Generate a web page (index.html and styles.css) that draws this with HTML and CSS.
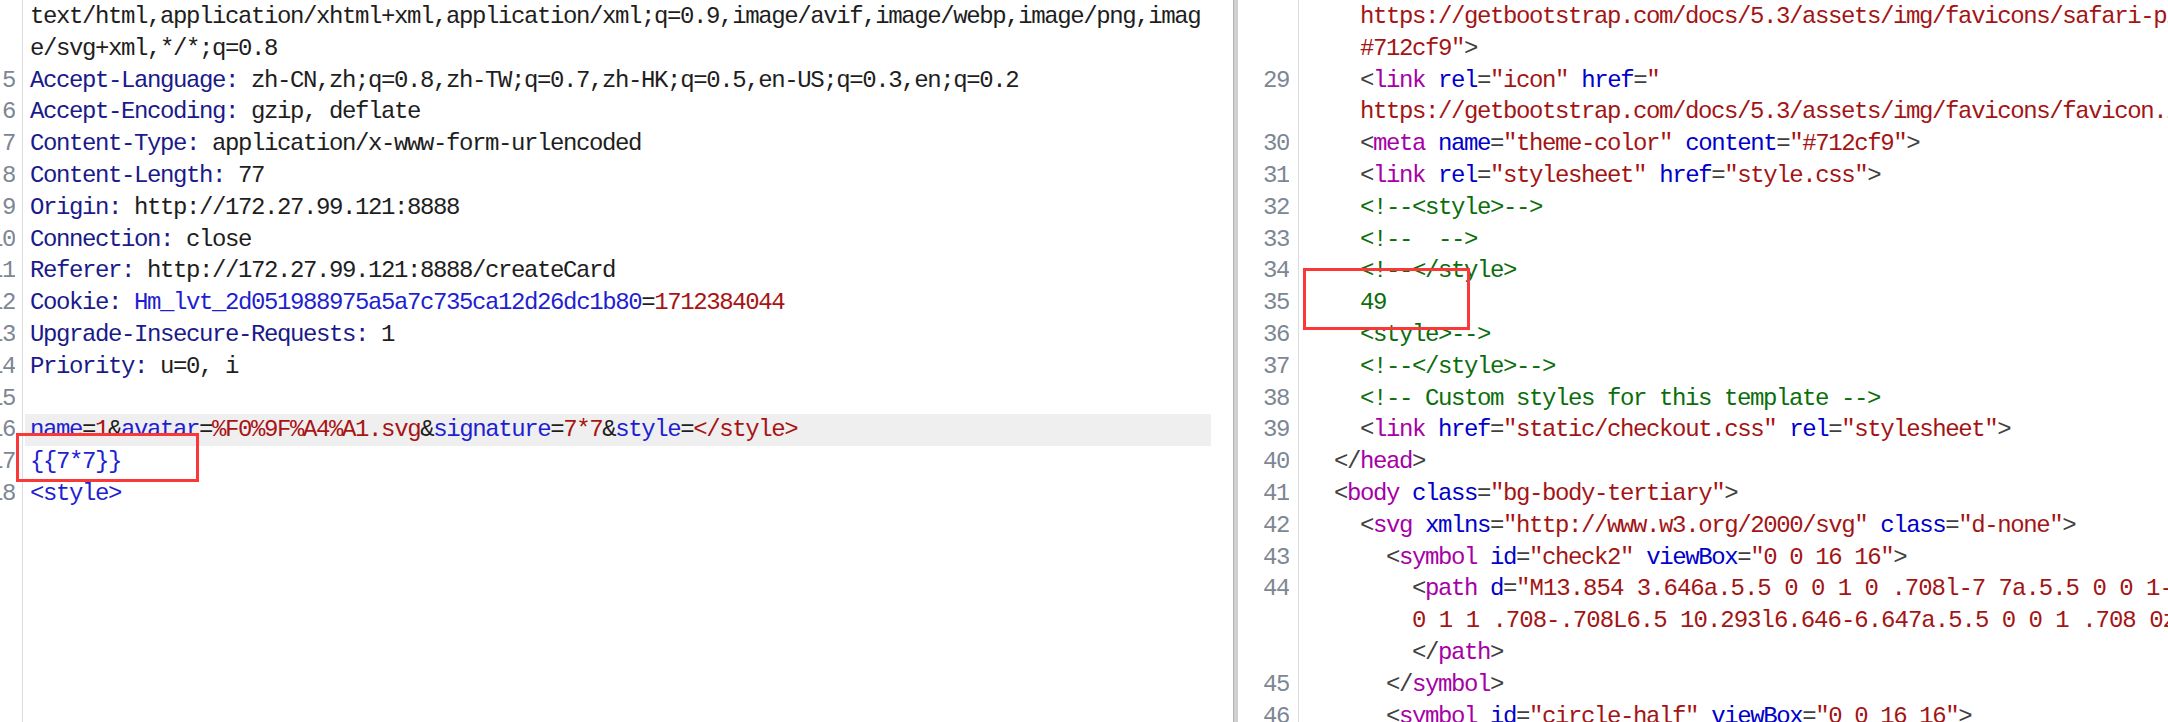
FILE: index.html
```html
<!DOCTYPE html>
<html lang="zh-CN">
<head>
    <meta charset="UTF-8">
    <meta name="viewport" content="width=device-width, initial-scale=1.0">
    <title>Request / Response</title>
    <link rel="stylesheet" href="styles.css">
</head>
<body>
    <div class="editor">
        <!-- request -->
        <div class="pane request">
            <div class="row"><span class="ln"></span><span class="code">text/html,application/xhtml+xml,application/xml;q=0.9,image/avif,image/webp,image/png,imag</span></div>
            <div class="row"><span class="ln"></span><span class="code">e/svg+xml,*/*;q=0.8</span></div>
            <div class="row"><span class="ln">5</span><span class="code"><span class="k">Accept-Language:</span> zh-CN,zh;q=0.8,zh-TW;q=0.7,zh-HK;q=0.5,en-US;q=0.3,en;q=0.2</span></div>
            <div class="row"><span class="ln">6</span><span class="code"><span class="k">Accept-Encoding:</span> gzip, deflate</span></div>
            <div class="row"><span class="ln">7</span><span class="code"><span class="k">Content-Type:</span> application/x-www-form-urlencoded</span></div>
            <div class="row"><span class="ln">8</span><span class="code"><span class="k">Content-Length:</span> 77</span></div>
            <div class="row"><span class="ln">9</span><span class="code"><span class="k">Origin:</span> http://172.27.99.121:8888</span></div>
            <div class="row"><span class="ln">10</span><span class="code"><span class="k">Connection:</span> close</span></div>
            <div class="row"><span class="ln">11</span><span class="code"><span class="k">Referer:</span> http://172.27.99.121:8888/createCard</span></div>
            <div class="row"><span class="ln">12</span><span class="code"><span class="k">Cookie:</span> <span class="pn">Hm_lvt_2d051988975a5a7c735ca12d26dc1b80</span>=<span class="pv">1712384044</span></span></div>
            <div class="row"><span class="ln">13</span><span class="code"><span class="k">Upgrade-Insecure-Requests:</span> 1</span></div>
            <div class="row"><span class="ln">14</span><span class="code"><span class="k">Priority:</span> u=0, i</span></div>
            <div class="row"><span class="ln">15</span><span class="code"></span></div>
            <div class="row current"><span class="ln">16</span><span class="code"><span class="pn">name</span>=<span class="pv">1</span>&amp;<span class="pn">avatar</span>=<span class="pv">%F0%9F%A4%A1.svg</span>&amp;<span class="pn">signature</span>=<span class="pv">7*7</span>&amp;<span class="pn">style</span>=<span class="pv">&lt;/style&gt;</span></span></div>
            <div class="row"><span class="ln">17</span><span class="code"><span class="pn">{{7*7}}</span></span></div>
            <div class="row"><span class="ln">18</span><span class="code"><span class="pn">&lt;style&gt;</span></span></div>

            <div class="mark mark-req"></div>
        </div>

        <div class="splitter"></div>

        <!-- response -->
        <div class="pane response">
            <div class="row"><span class="ln"></span><span class="code">    <span class="s">https://getbootstrap.com/docs/5.3/assets/img/favicons/safari-pinned-tab.svg"</span> <span class="a">color</span><span class="p">=</span><span class="s">"</span></span></div>
            <div class="row"><span class="ln"></span><span class="code">    <span class="s">#712cf9"</span><span class="p">&gt;</span></span></div>
            <div class="row"><span class="ln">29</span><span class="code">    <span class="p">&lt;</span><span class="t">link</span> <span class="a">rel</span><span class="p">=</span><span class="s">"icon"</span> <span class="a">href</span><span class="p">=</span><span class="s">"</span></span></div>
            <div class="row"><span class="ln"></span><span class="code">    <span class="s">https://getbootstrap.com/docs/5.3/assets/img/favicons/favicon.ico"</span><span class="p">&gt;</span></span></div>
            <div class="row"><span class="ln">30</span><span class="code">    <span class="p">&lt;</span><span class="t">meta</span> <span class="a">name</span><span class="p">=</span><span class="s">"theme-color"</span> <span class="a">content</span><span class="p">=</span><span class="s">"#712cf9"</span><span class="p">&gt;</span></span></div>
            <div class="row"><span class="ln">31</span><span class="code">    <span class="p">&lt;</span><span class="t">link</span> <span class="a">rel</span><span class="p">=</span><span class="s">"stylesheet"</span> <span class="a">href</span><span class="p">=</span><span class="s">"style.css"</span><span class="p">&gt;</span></span></div>
            <div class="row"><span class="ln">32</span><span class="code">    <span class="c">&lt;!--&lt;style&gt;--&gt;</span></span></div>
            <div class="row"><span class="ln">33</span><span class="code">    <span class="c">&lt;!--  --&gt;</span></span></div>
            <div class="row"><span class="ln">34</span><span class="code">    <span class="c">&lt;!--&lt;/style&gt;</span></span></div>
            <div class="row"><span class="ln">35</span><span class="code">    <span class="c">49</span></span></div>
            <div class="row"><span class="ln">36</span><span class="code">    <span class="c">&lt;style&gt;--&gt;</span></span></div>
            <div class="row"><span class="ln">37</span><span class="code">    <span class="c">&lt;!--&lt;/style&gt;--&gt;</span></span></div>
            <div class="row"><span class="ln">38</span><span class="code">    <span class="c">&lt;!-- Custom styles for this template --&gt;</span></span></div>
            <div class="row"><span class="ln">39</span><span class="code">    <span class="p">&lt;</span><span class="t">link</span> <span class="a">href</span><span class="p">=</span><span class="s">"static/checkout.css"</span> <span class="a">rel</span><span class="p">=</span><span class="s">"stylesheet"</span><span class="p">&gt;</span></span></div>
            <div class="row"><span class="ln">40</span><span class="code">  <span class="p">&lt;/</span><span class="t">head</span><span class="p">&gt;</span></span></div>
            <div class="row"><span class="ln">41</span><span class="code">  <span class="p">&lt;</span><span class="t">body</span> <span class="a">class</span><span class="p">=</span><span class="s">"bg-body-tertiary"</span><span class="p">&gt;</span></span></div>
            <div class="row"><span class="ln">42</span><span class="code">    <span class="p">&lt;</span><span class="t">svg</span> <span class="a">xmlns</span><span class="p">=</span><span class="s">"http://www.w3.org/2000/svg"</span> <span class="a">class</span><span class="p">=</span><span class="s">"d-none"</span><span class="p">&gt;</span></span></div>
            <div class="row"><span class="ln">43</span><span class="code">      <span class="p">&lt;</span><span class="t">symbol</span> <span class="a">id</span><span class="p">=</span><span class="s">"check2"</span> <span class="a">viewBox</span><span class="p">=</span><span class="s">"0 0 16 16"</span><span class="p">&gt;</span></span></div>
            <div class="row"><span class="ln">44</span><span class="code">        <span class="p">&lt;</span><span class="t">path</span> <span class="a">d</span><span class="p">=</span><span class="s path-data">"M13.854 3.646a.5.5 0 0 1 0 .708l-7 7a.5.5 0 0 1-.708 0l-3.5-3.5a.5.5</span></span></div>
            <div class="row"><span class="ln"></span><span class="code">        <span class="s path-data">0 1 1 .708-.708L6.5 10.293l6.646-6.647a.5.5 0 0 1 .708 0z"</span><span class="p">&gt;</span></span></div>
            <div class="row"><span class="ln"></span><span class="code">        <span class="p">&lt;/</span><span class="t">path</span><span class="p">&gt;</span></span></div>
            <div class="row"><span class="ln">45</span><span class="code">      <span class="p">&lt;/</span><span class="t">symbol</span><span class="p">&gt;</span></span></div>
            <div class="row"><span class="ln">46</span><span class="code">      <span class="p">&lt;</span><span class="t">symbol</span> <span class="a">id</span><span class="p">=</span><span class="s">"circle-half"</span> <span class="a">viewBox</span><span class="p">=</span><span class="s">"0 0 16 16"</span><span class="p">&gt;</span></span></div>

            <div class="mark mark-res"></div>
        </div>
    </div>
</body>
</html>
```
FILE: styles.css
```css
body{
    margin: 0;
    background: #fff;
    font-family: "Liberation Mono", "DejaVu Sans Mono", monospace;
    font-size: 24px;
    letter-spacing: -1.4px;
    color: #1e1e1e;
}
.editor{
    display: flex;
    height: 722px;
    overflow: hidden;
}
.pane{
    position: relative;
    overflow: hidden;
    padding-top: 1px;
}
.request{
    width: 1211px;
    /* gutter line */
    background: linear-gradient(#dcdcdc, #dcdcdc) 22px 0 / 1px 100% no-repeat;
}
.splitter{
    width: 5px;
    margin-left: 22px;
    background: #d0d0d0;
    border-left: 1px solid #b4b4b4;
    box-sizing: border-box;
}
.response{
    flex: 1;
    background: linear-gradient(#dcdcdc, #dcdcdc) 60px 0 / 1px 100% no-repeat;
}
.row{
    display: flex;
    height: 31.8px;
    line-height: 31.8px;
    white-space: pre;
}
.ln{
    display: flex;
    justify-content: flex-end;
    overflow: hidden;
    flex: none;
    color: #7d8794;
}
.code{
    flex: 1;
    overflow: hidden;
}
.request .ln{
    width: 15px;
    margin-right: 10px;
}
.request .code{
    padding-left: 5px;
}
.request .current .code{
    background: #efefef;
}
.response .ln{
    width: 51px;
    margin-right: 10px;
}
.response .code{
    padding-left: 9px;
}

/* request colours */
.k{ color: #1a1a8a; }
.pn{ color: #1f1fd2; }
.pv{ color: #a81414; }

/* response colours */
.p{ color: #404040; }
.t{ color: #a600a6; }
.a{ color: #0000cc; }
.s{ color: #a31515; }
.c{ color: #0b6e0b; }
.path-data{ letter-spacing: -1px; }

.mark{
    position: absolute;
    border: 3px solid #fa3838;
    box-sizing: border-box;
}
.mark-req{
    left: 16px;
    top: 433px;
    width: 183px;
    height: 49px;
}
.mark-res{
    left: 65px;
    top: 268px;
    width: 167px;
    height: 62px;
}
```
